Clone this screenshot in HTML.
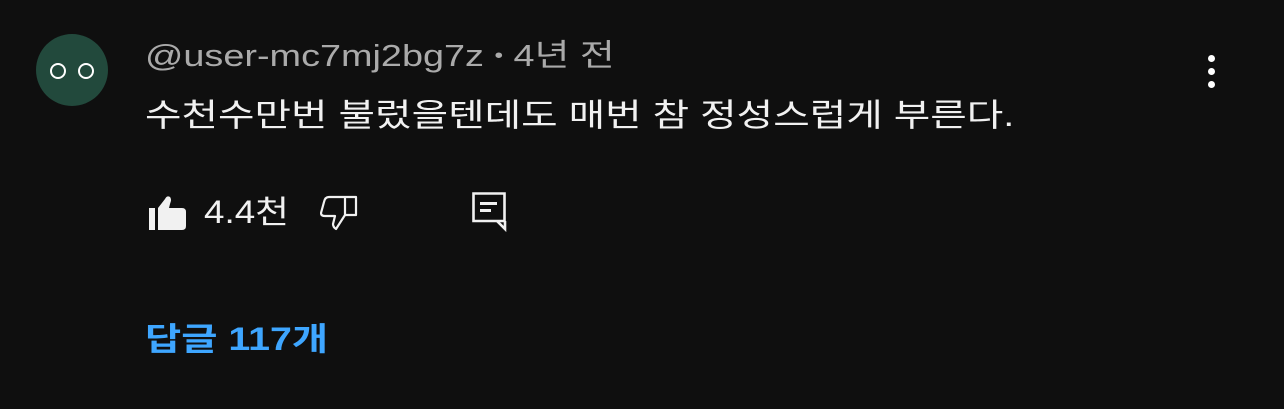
<!DOCTYPE html>
<html><head><meta charset="utf-8"><style>
html,body{margin:0;padding:0;background:#0f0f0f;width:1284px;height:409px;overflow:hidden;font-family:"Liberation Sans","Noto Sans CJK KR",sans-serif;}
.abs{position:absolute;white-space:nowrap;transform-origin:left center;}
</style></head><body>
<div class="abs" style="left:36px;top:34px;width:72px;height:72px;border-radius:50%;background:#22493c;"></div>
<div class="abs" style="left:50px;top:63px;width:16px;height:16px;border:2.5px solid #fff;border-radius:50%;box-sizing:border-box;"></div>
<div class="abs" style="left:78px;top:63px;width:16px;height:16px;border:2.5px solid #fff;border-radius:50%;box-sizing:border-box;"></div>
<div class="abs" style="left:145px;top:36px;font-size:31px;line-height:40px;color:#aaaaaa;transform:scaleX(1.22);">@user-mc7mj2bg7z <span style="font-size:20px;position:relative;top:-4px">•</span> 4년 전</div>
<div class="abs" style="left:145px;top:94px;font-size:32px;line-height:42px;color:#f1f1f1;transform:scaleX(1.24);">수천수만번 불렀을텐데도 매번 참 정성스럽게 부른다.</div>
<div class="abs" style="left:1208px;top:55px;width:8px;"><div style="width:7px;height:7px;border-radius:50%;background:#fff;margin-bottom:6px"></div><div style="width:7px;height:7px;border-radius:50%;background:#fff;margin-bottom:6px"></div><div style="width:7px;height:7px;border-radius:50%;background:#fff"></div></div>
<svg class="abs" style="left:148px;top:193px" width="40" height="40" viewBox="0 0 40 40"><rect x="1" y="15" width="6" height="22" fill="#f1f1f1"/><path d="M10 15 L17 6 Q19 2 22 4 Q24 6 22 11 L21 15 L34 15 Q38 15 38 19 L38 33 Q38 37 34 37 L10 37 Z" fill="#f1f1f1"/></svg>
<div class="abs" style="left:204px;top:192px;font-size:32px;line-height:40px;color:#f1f1f1;transform:scaleX(1.15);">4.4천</div>
<svg class="abs" style="left:320px;top:194px" width="40" height="40" viewBox="0 0 40 40"><path d="M25 3 L36 3 L36 21 L25 21 Z M25 3 L9 3 Q5 3 4 8 L1 19 Q1 22 5 22 L15 22 L13 30 Q13 33 16 35 L25 21" fill="none" stroke="#f1f1f1" stroke-width="2.2" stroke-linejoin="round"/></svg>
<svg class="abs" style="left:471px;top:191px" width="38" height="42" viewBox="0 0 38 42"><path d="M2.5 2.5 H33.5 V30 H2.5 Z" fill="none" stroke="#f1f1f1" stroke-width="2.6"/><path d="M26 30 L34 38 V30" fill="none" stroke="#f1f1f1" stroke-width="2.6"/><rect x="9" y="11" width="17" height="3" fill="#f1f1f1"/><rect x="9" y="18" width="11" height="3" fill="#f1f1f1"/></svg>
<div class="abs" style="left:145px;top:318px;font-size:32px;line-height:42px;color:#3ea6ff;font-weight:bold;transform:scaleX(1.23);">답글 117개</div>
</body></html>
